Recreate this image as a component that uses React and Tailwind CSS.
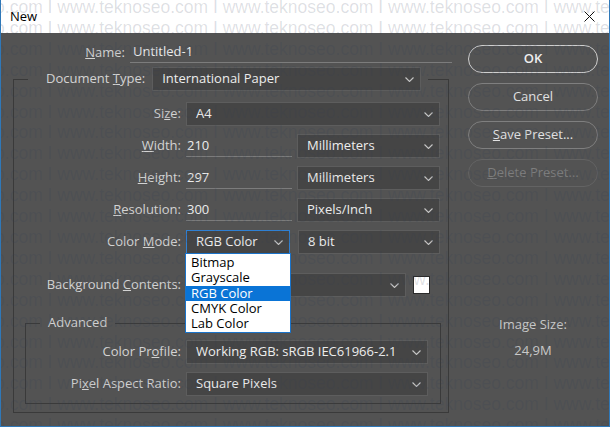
import clsx from "clsx";

function Chevron() {
  return (
    <svg width="9" height="5" viewBox="0 0 9 5" className="shrink-0">
      <path d="M0.5 0.5 L4.5 4.5 L8.5 0.5" fill="none" stroke="#c6c6c6" strokeWidth="1.1" />
    </svg>
  );
}

function Select({ value, className, focused }) {
  return (
    <div
      className={clsx(
        "h-[24px] flex items-center justify-between pl-[9px] pr-[6px] bg-[#454545] border shrink-0",
        focused ? "border-[#2f80d3]" : "border-[#5d5d5d]",
        className
      )}
    >
      <span className="text-[#ededed] text-[13px] whitespace-nowrap">{value}</span>
      <Chevron />
    </div>
  );
}

function Label({ children, className }) {
  return <div className={clsx("text-[#d3d3d3] text-[13px] text-right whitespace-nowrap shrink-0", className)}>{children}</div>;
}

function Field({ value }) {
  return (
    <div className="w-[106px] h-[22px] flex items-center pl-[1px] border-b border-[#7c7c7c] text-[#ededed] text-[13px] shrink-0">
      {value}
    </div>
  );
}

const modes = ["Bitmap", "Grayscale", "RGB Color", "CMYK Color", "Lab Color"];

function Watermark() {
  const rows = Array.from({ length: 21 });
  const line = "www.teknoseo.com I ".repeat(6);
  return (
    <div className="absolute inset-0 pointer-events-none overflow-hidden">
      <div className="absolute left-[-109px] top-[-3px] font-['Liberation_Sans',sans-serif] text-[17.5px] leading-[20.9px] text-[rgba(50,62,84,0.16)] whitespace-pre">
        {rows.map((_, i) => (
          <div key={i}>{line}</div>
        ))}
      </div>
    </div>
  );
}

export default function App() {
  return (
    <div className="w-[610px] h-[427px] relative overflow-hidden flex flex-col border-x border-b border-[#2f78b8] font-['Open_Sans',sans-serif]">
      {/* title bar */}
      <div className="h-[33px] bg-white flex items-center justify-between pl-[9px] pr-[14px] shrink-0">
        <span className="text-[13px] text-black">New</span>
        <svg width="11" height="11" viewBox="0 0 11 11">
          <path d="M0.5 0.5 L10.5 10.5 M10.5 0.5 L0.5 10.5" stroke="#111" strokeWidth="1" />
        </svg>
      </div>

      <div className="flex-1 bg-[#535353] flex">
        {/* left side */}
        <div className="w-[455px] flex flex-col pt-[9px]">
          <div className="flex items-center h-[21px] gap-[5px]">
            <Label className="w-[124px]">
              <u>N</u>ame:
            </Label>
            <div className="w-[322px] h-[21px] flex items-center pl-[3px] border-b border-[#7c7c7c] text-[#ededed] text-[13px]">
              Untitled-1
            </div>
          </div>

          <fieldset className="ml-[12px] mt-[4px] w-[436px] border border-[#3a3a3a] pt-[11px] pb-[8px]">
            <legend className="ml-[14px] pl-[18px] pr-[7px] h-[24px] flex items-center gap-[7px]">
              <span className="text-[#d3d3d3] text-[13px] whitespace-nowrap">
                Document <u>T</u>ype:
              </span>
              <Select value="International Paper" className="w-[269px]" />
            </legend>

            <div className="flex flex-col gap-[8px]">
              <div className="flex items-center gap-[5px]">
                <Label className="w-[167px]">
                  Si<u>z</u>e:
                </Label>
                <Select value="A4" className="w-[254px]" />
              </div>
              <div className="flex items-center gap-[5px]">
                <Label className="w-[167px]">
                  <u>W</u>idth:
                </Label>
                <Field value="210" />
                <Select value="Millimeters" className="w-[143px]" />
              </div>
              <div className="flex items-center gap-[5px]">
                <Label className="w-[167px]">
                  <u>H</u>eight:
                </Label>
                <Field value="297" />
                <Select value="Millimeters" className="w-[143px]" />
              </div>
              <div className="flex items-center gap-[5px]">
                <Label className="w-[167px]">
                  <u>R</u>esolution:
                </Label>
                <Field value="300" />
                <Select value="Pixels/Inch" className="w-[143px]" />
              </div>
              <div className="flex items-center gap-[5px]">
                <Label className="w-[167px]">
                  Color <u>M</u>ode:
                </Label>
                <div className="relative">
                  <Select value="RGB Color" className="w-[104px]" focused />
                  <div className="absolute left-[-1px] top-[23px] w-[106px] bg-white border border-[#1a73c9] py-[1px] z-10">
                    {modes.map((m) => (
                      <div
                        key={m}
                        className={clsx(
                          "h-[15.25px] leading-[15.25px] pl-[5px] text-[13px] whitespace-nowrap",
                          m === "RGB Color" ? "bg-[#0a74d6] text-white" : "text-black"
                        )}
                      >
                        {m}
                      </div>
                    ))}
                  </div>
                </div>
                <Select value="8 bit" className="w-[142px] ml-[3px]" />
              </div>
              <div className="flex items-center gap-[5px] mt-[11px]">
                <Label className="w-[167px]">
                  Background <u>C</u>ontents:
                </Label>
                <Select value="" className="w-[220px]" />
                <div className="w-[17px] h-[18px] bg-white border border-[#2b2b2b] ml-[2px]" />
              </div>
            </div>

            <fieldset className="ml-[11px] mt-[18px] w-[416px] border border-[#3a3a3a] pt-[9px] pb-[7px]">
              <legend className="ml-[14px] px-[8px] h-[16px] flex items-center text-[#d3d3d3] text-[13px]">Advanced</legend>
              <div className="flex flex-col gap-[8px]">
                <div className="flex items-center gap-[5px]">
                  <Label className="w-[155px]">
                    Color Pr<u>o</u>file:
                  </Label>
                  <Select value="Working RGB:  sRGB IEC61966-2.1" className="w-[242px]" />
                </div>
                <div className="flex items-center gap-[5px]">
                  <Label className="w-[155px]">
                    Pi<u>x</u>el Aspect Ratio:
                  </Label>
                  <Select value="Square Pixels" className="w-[242px]" />
                </div>
              </div>
            </fieldset>
          </fieldset>
        </div>

        {/* right side */}
        <div className="flex-1 pl-[12px] pt-[12px]">
          <div className="w-[130px] flex flex-col gap-[10px]">
            <button className="h-[28px] rounded-full border-[1.5px] border-[#cfcfcf] text-[#eeeeee] text-[13px] font-semibold">
              OK
            </button>
            <button className="h-[28px] rounded-full border-[1.5px] border-[#7f7f7f] text-[#e2e2e2] text-[13px]">
              Cancel
            </button>
            <button className="h-[28px] rounded-full border-[1.5px] border-[#7f7f7f] text-[#e2e2e2] text-[13px]">
              <u>S</u>ave Preset...
            </button>
            <button className="h-[28px] rounded-full border-[1.5px] border-[#636363] text-[#7e7e7e] text-[13px]">
              <u>D</u>elete Preset...
            </button>
            <div className="mt-[118px] text-center text-[#c9c9c9] text-[13px]">Image Size:</div>
            <div className="-mt-[4px] text-center text-[#c9c9c9] text-[13px]">24,9M</div>
          </div>
        </div>
      </div>

      <Watermark />
    </div>
  );
}
